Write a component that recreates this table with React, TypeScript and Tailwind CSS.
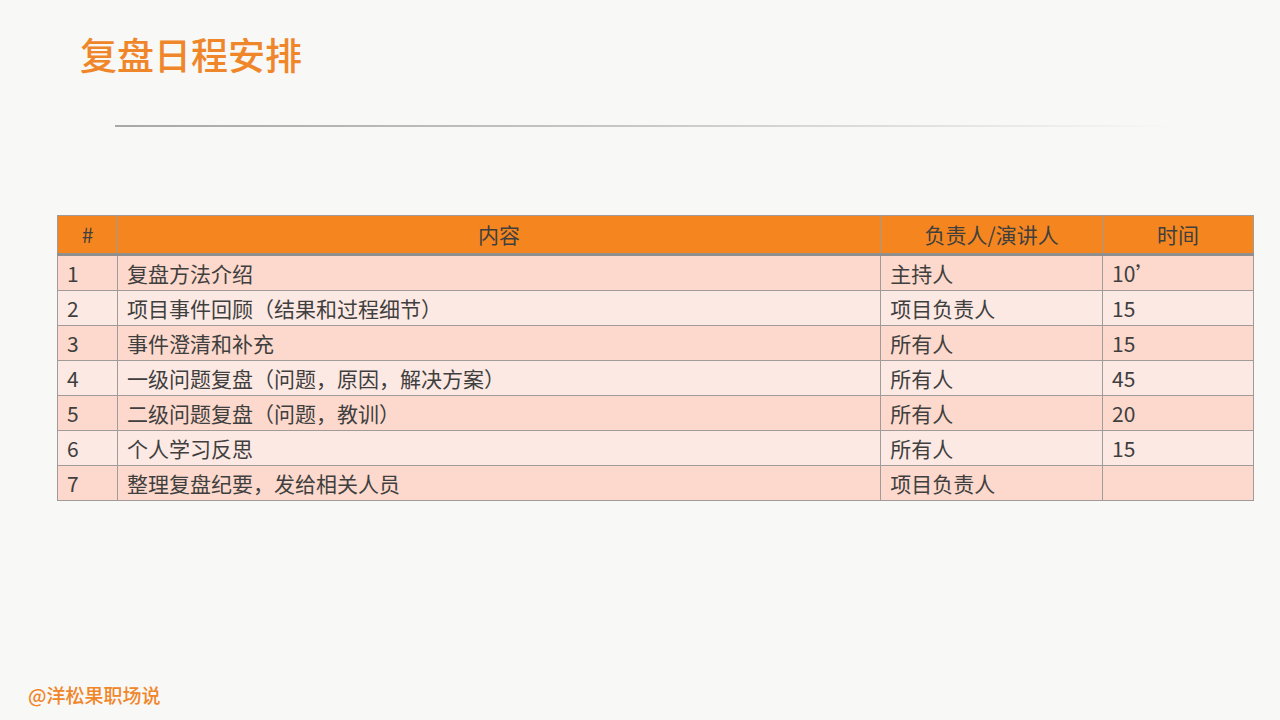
const rows = [
  ['1', '复盘方法介绍', '主持人', '10’'],
  ['2', '项目事件回顾（结果和过程细节）', '项目负责人', '15'],
  ['3', '事件澄清和补充', '所有人', '15'],
  ['4', '一级问题复盘（问题，原因，解决方案）', '所有人', '45'],
  ['5', '二级问题复盘（问题，教训）', '所有人', '20'],
  ['6', '个人学习反思', '所有人', '15'],
  ['7', '整理复盘纪要，发给相关人员', '项目负责人', ''],
];

const font = { fontFamily: '"Noto Sans CJK SC", "Open Sans", sans-serif' };

export default function App() {
  return (
    <div className="relative h-[720px] w-[1280px] overflow-hidden bg-[#f8f8f6]" style={font}>
      <h1 className="pl-[80px] pt-[30px] text-[37px] font-medium leading-[48px] text-[#f0862a]">
        复盘日程安排
      </h1>
      <div className="ml-[115px] mt-[47px] h-[2px] w-[1060px] bg-gradient-to-r from-[#a8a8a4] via-[#c8c8c4] to-transparent" />

      <table className="ml-[57px] mt-[88px] w-[1197px] border-collapse text-[21px] text-[#3f3f3f]">
        <colgroup>
          <col className="w-[60px]" />
          <col className="w-[764px]" />
          <col className="w-[222px]" />
          <col className="w-[151px]" />
        </colgroup>
        <thead>
          <tr className="h-[39px] bg-[#f5861f] text-center">
            <th className="border border-b-[3px] border-[#a09b99] border-b-[#8f8f8f] font-normal">#</th>
            <th className="border border-b-[3px] border-[#a09b99] border-b-[#8f8f8f] font-normal">内容</th>
            <th className="border border-b-[3px] border-[#a09b99] border-b-[#8f8f8f] font-normal">负责人/演讲人</th>
            <th className="border border-b-[3px] border-[#a09b99] border-b-[#8f8f8f] font-normal">时间</th>
          </tr>
        </thead>
        <tbody>
          {rows.map((r, i) => (
            <tr key={r[0]} className={`h-[35px] ${i % 2 === 0 ? 'bg-[#fcd9cc]' : 'bg-[#fde9e3]'}`}>
              {r.map((c, j) => (
                <td key={j} className="border border-[#a09b99] px-[9px] py-0 leading-[34px]">
                  {c}
                </td>
              ))}
            </tr>
          ))}
        </tbody>
      </table>

      <div className="absolute left-[28px] top-[681px] text-[19px] font-medium text-[#f0862a]">@洋松果职场说</div>
    </div>
  );
}
